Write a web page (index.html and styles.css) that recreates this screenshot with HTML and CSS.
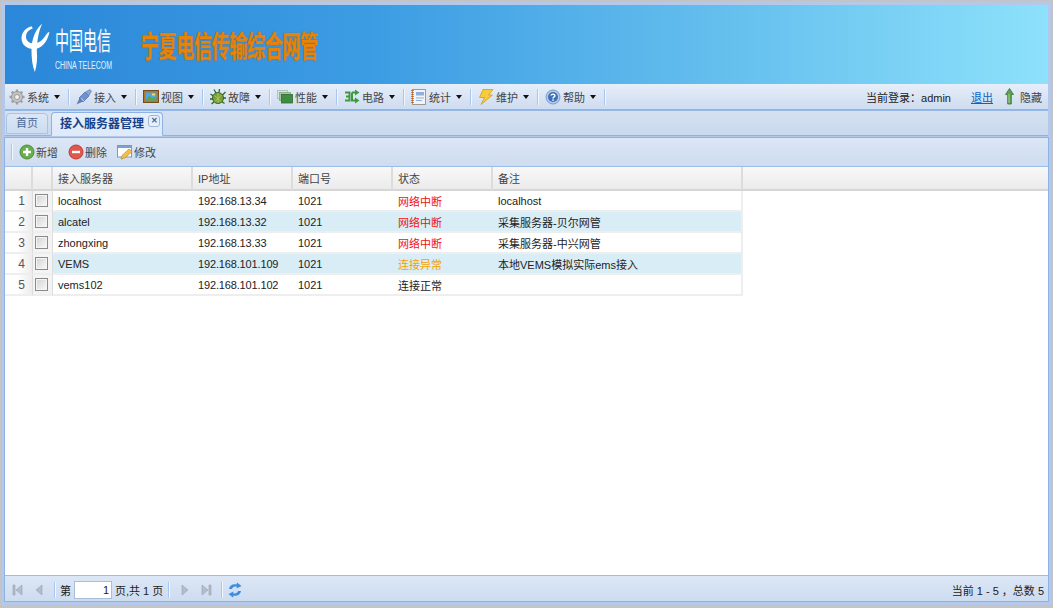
FILE: index.html
```html
<!DOCTYPE html>
<html>
<head>
    <title>宁夏电信传输综合网管</title>
    <link rel="stylesheet" href="styles.css">
</head>
<body>
<div class="frame">
    <div class="banner">
        <svg class="logo-mark" width="29" height="49" viewBox="0 0 84 147">
            <path d="M30 10C12 14 0 30 0 46C0 66 16 78 36 78C58 78 78 58 84 26C76 28 72 40 62 50C52 60 40 62 28 60C16 56 12 46 14 36C16 26 22 22 34 16Z" fill="#fff"/>
            <path d="M62 2C44 16 30 46 30 82C30 104 32 128 40 147C46 130 48 106 46 84C46 52 52 24 62 2Z" fill="#fff"/>
        </svg>
        <div class="logo-text">
            <div class="logo-cn">中国电信</div>
            <div class="logo-en">CHINA TELECOM</div>
        </div>
        <div class="site-title">宁夏电信传输综合网管</div>
    </div>

    <div class="menubar">
        <a class="menu">
            <svg class="ico" viewBox="0 0 16 16"><path d="M8 .5V15.500M.5 8H15.500M2.700 2.700L13.300 13.300M13.300 2.700L2.700 13.300" stroke="#a2a2a2" stroke-width="2.400"/><circle cx="8" cy="8" r="5.500" fill="#c4c4c4" stroke="#8f8f8f" stroke-width=".8"/><circle cx="8" cy="8" r="2.500" fill="#f2f2f2" stroke="#8a8a8a" stroke-width=".8"/></svg>
            <span>系统</span><i class="caret"></i>
        </a>
        <span class="sep"></span>
        <a class="menu">
            <svg class="ico" viewBox="0 0 16 16"><path d="M.5 15.500L3.500 9L7 12.500Z" fill="#5f82bd"/><path d="M3 9L9 3L13 7L7 13Z" fill="#6f92cc" stroke="#4c6da6" stroke-width=".7"/><path d="M9.500 3L14 .5L15.500 2L13 6.500Z" fill="#8aa8d8" stroke="#5577b0" stroke-width=".6"/><path d="M5 9.500L8 12" stroke="#c9d6ea" stroke-width="1"/></svg>
            <span>接入</span><i class="caret"></i>
        </a>
        <span class="sep"></span>
        <a class="menu">
            <svg class="ico" viewBox="0 0 16 16"><rect x=".5" y="1.500" width="15" height="12" fill="#b3762f" stroke="#7a4a1a"/><rect x="2.500" y="3.500" width="11" height="8" fill="#4ea8e6"/><path d="M2.500 11.500L6 6.500L9 9L13.500 8V11.500Z" fill="#59a84b"/><path d="M9 4.500h3v2h-3z" fill="#f0e060"/></svg>
            <span>视图</span><i class="caret"></i>
        </a>
        <span class="sep"></span>
        <a class="menu">
            <svg class="ico" viewBox="0 0 16 16"><path d="M.5 5L4 7.500M0 10H3.500M1.500 15L5 12M15.500 3L12 6.500M16 9H12.500M14.500 14.500L11 12M4 .5L6 4M9.500 0L9 3.500" stroke="#1f6e2a" stroke-width="1.300" fill="none"/><ellipse cx="8" cy="9" rx="5.500" ry="5.500" fill="#7c9f38" stroke="#2f5d1c" stroke-width=".9"/><path d="M4.500 6.500L11 12.500M11.500 6L5 12.500M8 4V14" stroke="#a9c65d" stroke-width="1"/></svg>
            <span>故障</span><i class="caret"></i>
        </a>
        <span class="sep"></span>
        <a class="menu">
            <svg class="ico" viewBox="0 0 16 16"><rect x=".5" y="1.500" width="10" height="8" fill="#dce6e0" stroke="#a9bcb0" stroke-width=".8"/><rect x="2.500" y="3.500" width="11" height="8" fill="#a4c6a4" stroke="#82a882" stroke-width=".8"/><rect x="4.500" y="5.500" width="11" height="8.500" fill="#3f8c42" stroke="#2f6d33" stroke-width=".8"/></svg>
            <span>性能</span><i class="caret"></i>
        </a>
        <span class="sep"></span>
        <a class="menu">
            <svg class="ico" viewBox="0 0 16 16"><path d="M1 3.500H5.500V11.500H1M2 7.500H5M8 3.500H11M8 3.500V11.500H11" stroke="#3f9a3f" stroke-width="2" fill="none"/><path d="M11 .5L15.500 3.500L11 6.500ZM11 8.500L15.500 11.500L11 14.500Z" fill="#3f9a3f"/></svg>
            <span>电路</span><i class="caret"></i>
        </a>
        <span class="sep"></span>
        <a class="menu">
            <svg class="ico" viewBox="0 0 16 16"><rect x="1.500" y=".5" width="13" height="15" fill="#f4f4f4" stroke="#9a9a9a"/><path d="M1.500 1V15" stroke="#b5632d" stroke-width="2.400" stroke-dasharray="1 1"/><rect x="5" y="3" width="8" height="3.500" fill="#8fb0dc"/><path d="M5 9H13M5 11.500H11" stroke="#8fb0dc" stroke-width="1"/></svg>
            <span>统计</span><i class="caret"></i>
        </a>
        <span class="sep"></span>
        <a class="menu">
            <svg class="ico" viewBox="0 0 16 16"><path d="M5 .5H15L10.500 6H14.500L3 15.500L6.500 8.500H1.500Z" fill="#f6cc3c" stroke="#d79a1c" stroke-width=".8"/></svg>
            <span>维护</span><i class="caret"></i>
        </a>
        <span class="sep"></span>
        <a class="menu">
            <svg class="ico" viewBox="0 0 16 16"><circle cx="8" cy="8" r="7" fill="#b3cbec" stroke="#7a9ccb"/><circle cx="8" cy="8" r="5" fill="#3f6fb5"/><path d="M6 6.500C6 4.800 10 4.800 10 6.700C10 8 8 7.800 8 9.500" stroke="#fff" stroke-width="1.400" fill="none"/><rect x="7.300" y="10.300" width="1.500" height="1.500" fill="#fff"/></svg>
            <span>帮助</span><i class="caret"></i>
        </a>
        <span class="sep"></span>
        <div class="user-info">
            <span class="login">当前登录：admin</span>
            <a class="logout">退出</a>
            <svg class="up-ico" width="11" height="17" viewBox="0 0 11 17"><path d="M5.500 .5L9.500 6.500H7.300V16H3.700V6.500H1.500Z" fill="#5f9f52" stroke="#3a7034" stroke-width=".8"/><path d="M5 6V15" stroke="#a9d39a" stroke-width="1"/></svg>
            <span class="hide-link">隐藏</span>
        </div>
    </div>

    <div class="tabstrip">
        <a class="tab">首页</a>
        <a class="tab active">接入服务器管理<span class="tab-close">✕</span></a>
    </div>

    <div class="panel">
        <div class="actions">
            <span class="sep"></span>
            <a class="action">
                <svg class="ico" viewBox="0 0 16 16"><circle cx="8" cy="8" r="7" fill="#69ad4e" stroke="#4d8d39"/><path d="M8 4V12M4 8H12" stroke="#fff" stroke-width="2.400"/></svg>
                <span>新增</span>
            </a>
            <a class="action">
                <svg class="ico" viewBox="0 0 16 16"><circle cx="8" cy="8" r="7" fill="#e2574c" stroke="#bf3c33"/><path d="M4 8H12" stroke="#fff" stroke-width="2.400"/></svg>
                <span>删除</span>
            </a>
            <a class="action">
                <svg class="ico" viewBox="0 0 16 16"><rect x=".5" y="1.500" width="14" height="11.500" fill="#fff" stroke="#7f97bd"/><rect x="1" y="2" width="13" height="2" fill="#7f9fd0"/><path d="M4 15L5 11.500L12 5L15 7.500L8 14Z" fill="#f0c04c" stroke="#b88a2c" stroke-width=".7"/></svg>
                <span>修改</span>
            </a>
        </div>

        <div class="grid-wrap">
            <table class="grid">
                <thead>
                    <tr>
                        <th class="c-num"></th>
                        <th class="c-check"></th>
                        <th class="c-name">接入服务器</th>
                        <th class="c-ip">IP地址</th>
                        <th class="c-port">端口号</th>
                        <th class="c-state">状态</th>
                        <th class="c-note">备注</th>
                        <th class="c-fill"></th>
                    </tr>
                </thead>
                <tbody>
                    <tr>
                        <td class="num">1</td><td class="check"><i class="box"></i></td>
                        <td>localhost</td><td class="ip">192.168.13.34</td><td>1021</td>
                        <td class="st-bad">网络中断</td><td>localhost</td>
                    </tr>
                    <tr class="alt">
                        <td class="num">2</td><td class="check"><i class="box"></i></td>
                        <td>alcatel</td><td class="ip">192.168.13.32</td><td>1021</td>
                        <td class="st-bad">网络中断</td><td>采集服务器-贝尔网管</td>
                    </tr>
                    <tr>
                        <td class="num">3</td><td class="check"><i class="box"></i></td>
                        <td>zhongxing</td><td class="ip">192.168.13.33</td><td>1021</td>
                        <td class="st-bad">网络中断</td><td>采集服务器-中兴网管</td>
                    </tr>
                    <tr class="alt">
                        <td class="num">4</td><td class="check"><i class="box"></i></td>
                        <td>VEMS</td><td class="ip">192.168.101.109</td><td>1021</td>
                        <td class="st-warn">连接异常</td><td>本地VEMS模拟实际ems接入</td>
                    </tr>
                    <tr>
                        <td class="num">5</td><td class="check"><i class="box"></i></td>
                        <td>vems102</td><td class="ip">192.168.101.102</td><td>1021</td>
                        <td>连接正常</td><td></td>
                    </tr>
                </tbody>
            </table>
        </div>

        <div class="pager">
            <span class="sep first"></span>
            <svg class="pg" viewBox="0 0 16 16"><path d="M3 3V13H5V3ZM12 3L6 8L12 13Z" fill="#b4bcc8" stroke="#98a2b0" stroke-width=".6"/></svg>
            <svg class="pg" viewBox="0 0 16 16"><path d="M11 3L5 8L11 13Z" fill="#b4bcc8" stroke="#98a2b0" stroke-width=".6"/></svg>
            <span class="sep"></span>
            <span>第</span>
            <span class="page-input">1</span>
            <span>页,共 1 页</span>
            <span class="sep"></span>
            <svg class="pg" viewBox="0 0 16 16"><path d="M5 3L11 8L5 13Z" fill="#b4bcc8" stroke="#98a2b0" stroke-width=".6"/></svg>
            <svg class="pg" viewBox="0 0 16 16"><path d="M4 3L10 8L4 13ZM11 3V13H13V3Z" fill="#b4bcc8" stroke="#98a2b0" stroke-width=".6"/></svg>
            <span class="sep"></span>
            <svg class="pg refresh" viewBox="0 0 16 16"><path d="M2 7C2.500 3.500 6 1.500 9.500 2.500L10 .5L14.500 4L9.500 6.500L9.800 4.800C7.500 4 5.500 5 5 7Z" fill="#3a8ee0"/><path d="M14 9C13.500 12.500 10 14.500 6.500 13.500L6 15.500L1.500 12L6.500 9.500L6.200 11.200C8.500 12 10.500 11 11 9Z" fill="#3a8ee0"/></svg>
            <span class="page-info">当前 1 - 5 ，总数 5</span>
        </div>
    </div>
</div>
</body>
</html>
```

FILE: styles.css
```css
html, body { margin: 0; padding: 0; height: 100%; overflow: hidden; }
body { font-family: "Liberation Sans", "Noto Sans CJK SC", sans-serif; font-size: 11px; color: #222; background: #c9c9c9; }
a { cursor: pointer; }

.frame { height: 100%; box-sizing: border-box; border: 2px solid #c4c4c4; border-bottom-width: 3px; padding: 3px 3px 3px 3px; background: #b4c9ea; display: flex; flex-direction: column; }

.banner { height: 79px; flex: none; display: flex; align-items: flex-start; overflow: hidden; background: linear-gradient(to right, #2a87d9 0%, #3c9ce3 35%, #66c0ee 70%, #8de1fb 100%); }
.logo-mark { margin: 18px 0 0 16px; flex: none; }
.logo-text { margin: 23px 0 0 5px; width: 58px; flex: none; color: #fff; }
.logo-cn { height: 27px; font-size: 14px; line-height: 27px; white-space: nowrap; transform: scaleY(1.800); transform-origin: center; margin-bottom: 6px; }
.logo-en { font-size: 10px; line-height: 10px; color: #e0f0fa; white-space: nowrap; transform: scaleX(.700); transform-origin: left center; }
.site-title { margin: 26px 0 0 28px; font-size: 18px; line-height: 32px; font-weight: bold; color: #e6830a; white-space: nowrap; transform: scaleY(1.650); transform-origin: center; text-shadow: 0 0 1px #a55a08; letter-spacing: -.300px; }

.menubar { box-sizing: border-box; height: 27px; flex: none; display: flex; align-items: center; background: linear-gradient(to bottom, #e6eef9, #cedcf0); border-bottom: 2px solid #92b6e6; }
.menubar .menu:first-child { margin-left: 4px; }
.sep { display: inline-block; width: 1px; height: 16px; background: #a9c7ee; box-shadow: 1px 0 0 #f2f7fd; flex: none; margin: 0 7px 0 8px; }
.menu { display: flex; align-items: center; color: #444; }
.ico { width: 16px; height: 16px; flex: none; margin-right: 2px; }
.caret { width: 0; height: 0; border: 3px solid transparent; border-top: 4px solid #111; border-bottom: 0; margin-left: 5px; }

.user-info { margin-left: auto; display: flex; align-items: center; padding-right: 6px; color: #222; }
.login { margin-right: 20px; }
.logout { color: #0a62c4; text-decoration: underline; margin-right: 11px; }
.up-ico { margin-right: 5px; }
.hide-link { color: #444; }

.tabstrip { box-sizing: border-box; height: 25px; flex: none; padding-left: 1px; display: flex; align-items: flex-end; gap: 3px; background: linear-gradient(to bottom, #d5e1f2, #c9d9ee); border-bottom: 1px solid #8db2e3; }
.tab { box-sizing: border-box; height: 21px; padding: 0 9px; margin-bottom: 1px; line-height: 19px; border: 1px solid #a7c3e8; border-radius: 4px 4px 0 0; color: #4a6a96; background: linear-gradient(to bottom, #dbe7f6, #cddcf0); }
.tab.active { height: 24px; width: 112px; padding: 0 0 0 8px; margin-bottom: -1px; font-size: 12px; font-weight: bold; line-height: 22px; color: #15428b; background: linear-gradient(to bottom, #e6effb, #deeafa); border-color: #8db2e3; border-bottom-color: #deeafa; position: relative; white-space: nowrap; }
.tab-close { position: absolute; top: 2px; right: 2px; width: 10px; height: 10px; border: 1px solid #9db7dc; border-radius: 3px; background: #e8eff9; color: #45618c; font-size: 8px; line-height: 10px; text-align: center; font-weight: bold; }

.panel { flex: 1; min-height: 0; margin: 1px -1px 0; display: flex; flex-direction: column; border: 1px solid #8db2e3; background: #fff; }
.actions { height: 28px; flex: none; display: flex; align-items: center; background: linear-gradient(to bottom, #dce7f6, #cedcef); border-bottom: 1px solid #9dbde8; }
.actions .sep { margin: 0 7px 0 6px; }
.action { display: flex; align-items: center; color: #444; margin-right: 10px; }
.action .ico { margin-right: 1px; }

.grid-wrap { flex: 1; min-height: 0; overflow: hidden; background: #fff; }
.grid { border-collapse: separate; border-spacing: 0; table-layout: fixed; width: 1043px; }
.grid th { height: 22px; padding: 0 6px 0 5px; text-align: left; font-weight: normal; color: #444; background: linear-gradient(to bottom, #f8f8f8, #ebebeb); border-right: 2px solid #dcdcdc; border-bottom: 2px solid #d6d6d6; box-sizing: content-box; }
.grid th.c-fill { border-right: 0; }
.c-num { width: 15px; }
.c-check { width: 7px; }
.c-name { width: 127px; }
.c-ip, .c-port, .c-state { width: 87px; }
.c-note { width: 237px; }
.grid td { height: 18px; padding: 1px 6px 0 5px; color: #222; border-bottom: 2px solid #eeeeee; white-space: nowrap; box-sizing: content-box; }
.grid tr td:last-child { border-right: 2px solid #eeeeee; }
.grid tr.alt td { background: #d9edf6; }
.grid td.num, .grid tr.alt td.num { text-align: right; padding-right: 7px; color: #555; font-size: 12px; background: linear-gradient(to right, #fff 45%, #ececec); border-right: 1px solid #dcdcdc; }
.grid td.check, .grid tr.alt td.check { background: #f4f4f4; border-right: 1px solid #dcdcdc; padding: 0 3px 0 2px; }
.grid td.ip { letter-spacing: -.150px; }
.box { display: block; box-sizing: border-box; width: 13px; height: 13px; border: 1px solid #8a8a8a; background: linear-gradient(to bottom right, #d2d2d2, #fafafa); box-shadow: inset 0 0 0 1px #f5f5f5; }
.grid td.st-bad { color: #f01010; }
.grid td.st-warn { color: #f5a000; }

.pager { height: 23px; padding-top: 2px; flex: none; display: flex; align-items: center; color: #222; background: linear-gradient(to bottom, #dce7f6, #cddcf0); border-top: 1px solid #9dbde8; }
.pager .sep { margin: 0 5px; }
.pager .sep.first { visibility: hidden; width: 0; margin: 0 1px; }
.pg { width: 16px; height: 16px; margin: 0 2.500px; flex: none; }
.pg.refresh { margin-left: 0; }
.page-input { box-sizing: border-box; width: 38px; height: 18px; margin: 0 3px; padding-right: 2px; line-height: 16px; text-align: right; background: #fff; border: 1px solid #a9bfd8; }
.page-info { margin-left: auto; padding-right: 4px; }
```
